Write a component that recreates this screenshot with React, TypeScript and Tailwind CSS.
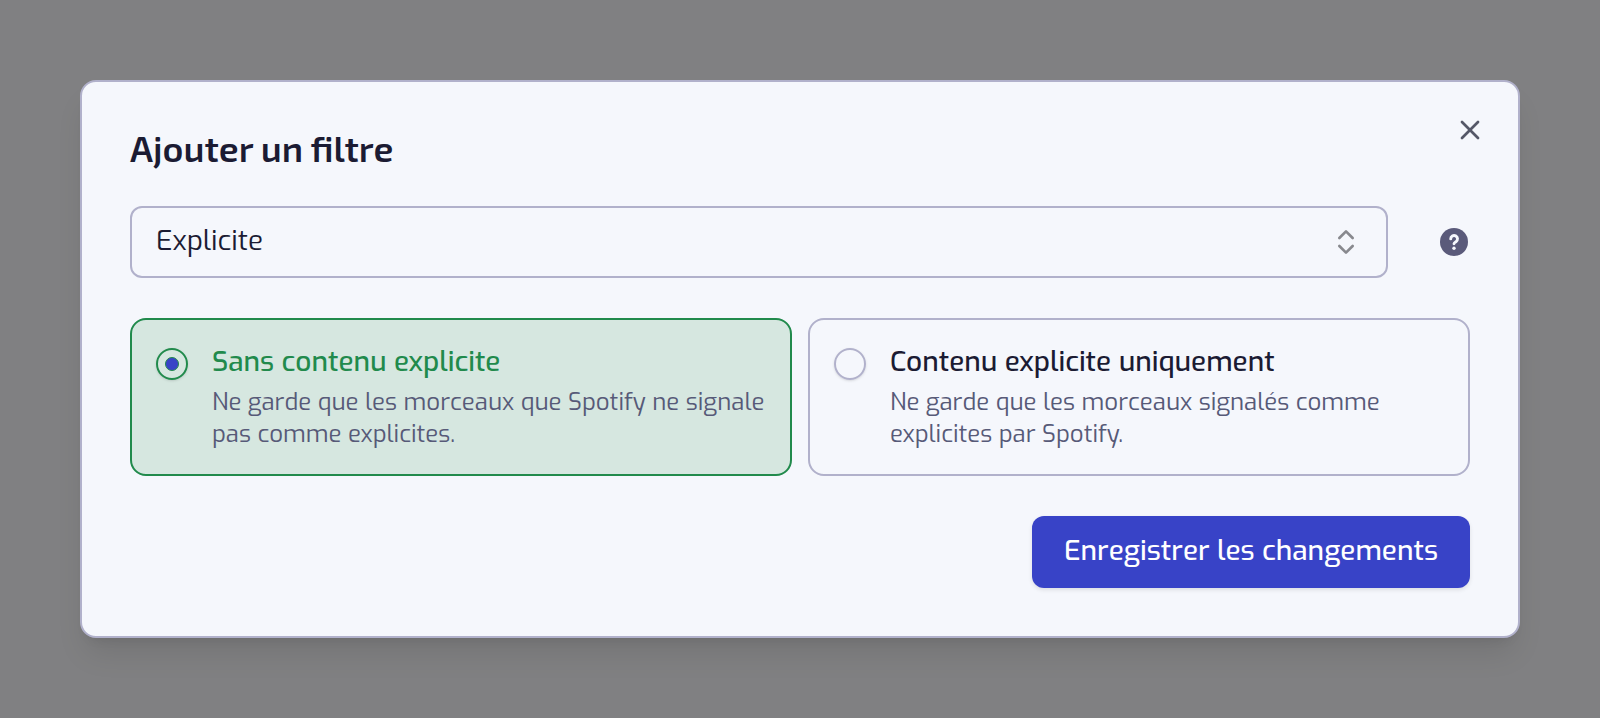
import { useState } from "react";
import { ChevronsUpDown, X } from "lucide-react";

const options = [
  {
    value: "clean",
    title: "Sans contenu explicite",
    description: "Ne garde que les morceaux que Spotify ne signale pas comme explicites.",
  },
  {
    value: "explicit",
    title: "Contenu explicite uniquement",
    description: "Ne garde que les morceaux signalés comme explicites par Spotify.",
  },
];

export default function App() {
  const [choice, setChoice] = useState("clean");

  return (
    <div className="flex min-h-screen items-center bg-[#808082] px-20 py-10 font-['Exo','Exo_2','Roboto',sans-serif] text-[#1b1b33]">
      <div
        role="dialog"
        aria-labelledby="dialog-title"
        className="relative flex w-full flex-col gap-10 rounded-2xl border-2 border-[#b1b1cb] bg-[#f5f7fc] p-12 shadow-[0_20px_30px_-6px_rgba(0,0,0,0.1),0_8px_12px_-8px_rgba(0,0,0,0.1)]"
      >
        <h2 id="dialog-title" className="font-['Exo_2','Exo','Roboto',sans-serif] text-[36px] leading-9 font-semibold">
          Ajouter un filtre
        </h2>

        <div className="flex items-center gap-[50px]">
          <div className="relative flex-1">
            <select
              aria-label="Type de filtre"
              className="h-18 w-full appearance-none rounded-xl border-2 border-[#b1b1cb] bg-transparent px-6 pb-0.5 text-[28px]"
            >
              <option>Explicite</option>
            </select>
            <ChevronsUpDown className="pointer-events-none absolute top-5 right-6.5 size-8 text-[#88898e]" />
          </div>
          <button type="button" aria-label="Aide" className="flex size-8 items-center justify-center text-[#5a5a7a]">
            <svg viewBox="0 0 28 28" className="size-7">
              <circle cx="14" cy="14" r="14" fill="currentColor" />
              <path
                d="M10.7 10.900a3.400 3.400 0 1 1 5.300 2.800c-1.200.8-2 1.300-2 2.100"
                fill="none"
                stroke="#f5f7fc"
                strokeWidth="2.900"
                strokeLinecap="round"
              />
              <circle cx="14" cy="20.300" r="1.700" fill="#f5f7fc" />
            </svg>
          </button>
        </div>

        <div role="radiogroup" aria-label="Contenu" className="grid grid-cols-2 gap-4">
          {options.map((option) => (
            <label
              key={option.value}
              className="group flex cursor-pointer items-start gap-6 rounded-2xl border-2 border-[#b1b1cb] p-6 has-checked:border-[#218a4c] has-checked:bg-[#d6e7e0]"
            >
              <input
                type="radio"
                name="explicit-filter"
                value={option.value}
                checked={choice === option.value}
                onChange={() => setChoice(option.value)}
                className="mt-1 grid size-8 shrink-0 appearance-none place-items-center rounded-full border-2 border-[#b1b1cb] shadow-sm checked:border-[#218a4c] checked:before:size-3.5 checked:before:rounded-full checked:before:border checked:before:border-[#218a4c] checked:before:bg-[#3843c7] checked:before:content-['']"
              />
              <span className="flex flex-col gap-1.5">
                <span className="text-[28px] leading-9 font-medium group-has-checked:text-[#218a4c]">{option.title}</span>
                <span className="text-[24px] leading-8 text-[#575a78]">{option.description}</span>
              </span>
            </label>
          ))}
        </div>

        <button
          type="button"
          className="h-18 self-end rounded-xl bg-[#3843c7] px-8 pb-0.5 text-[28px] font-medium text-white shadow-[0_2px_4px_rgba(0,0,0,0.1)]"
        >
          Enregistrer les changements
        </button>

        <button type="button" aria-label="Fermer" className="absolute top-8 right-8 text-[#555868]">
          <X className="size-8" />
        </button>
      </div>
    </div>
  );
}
